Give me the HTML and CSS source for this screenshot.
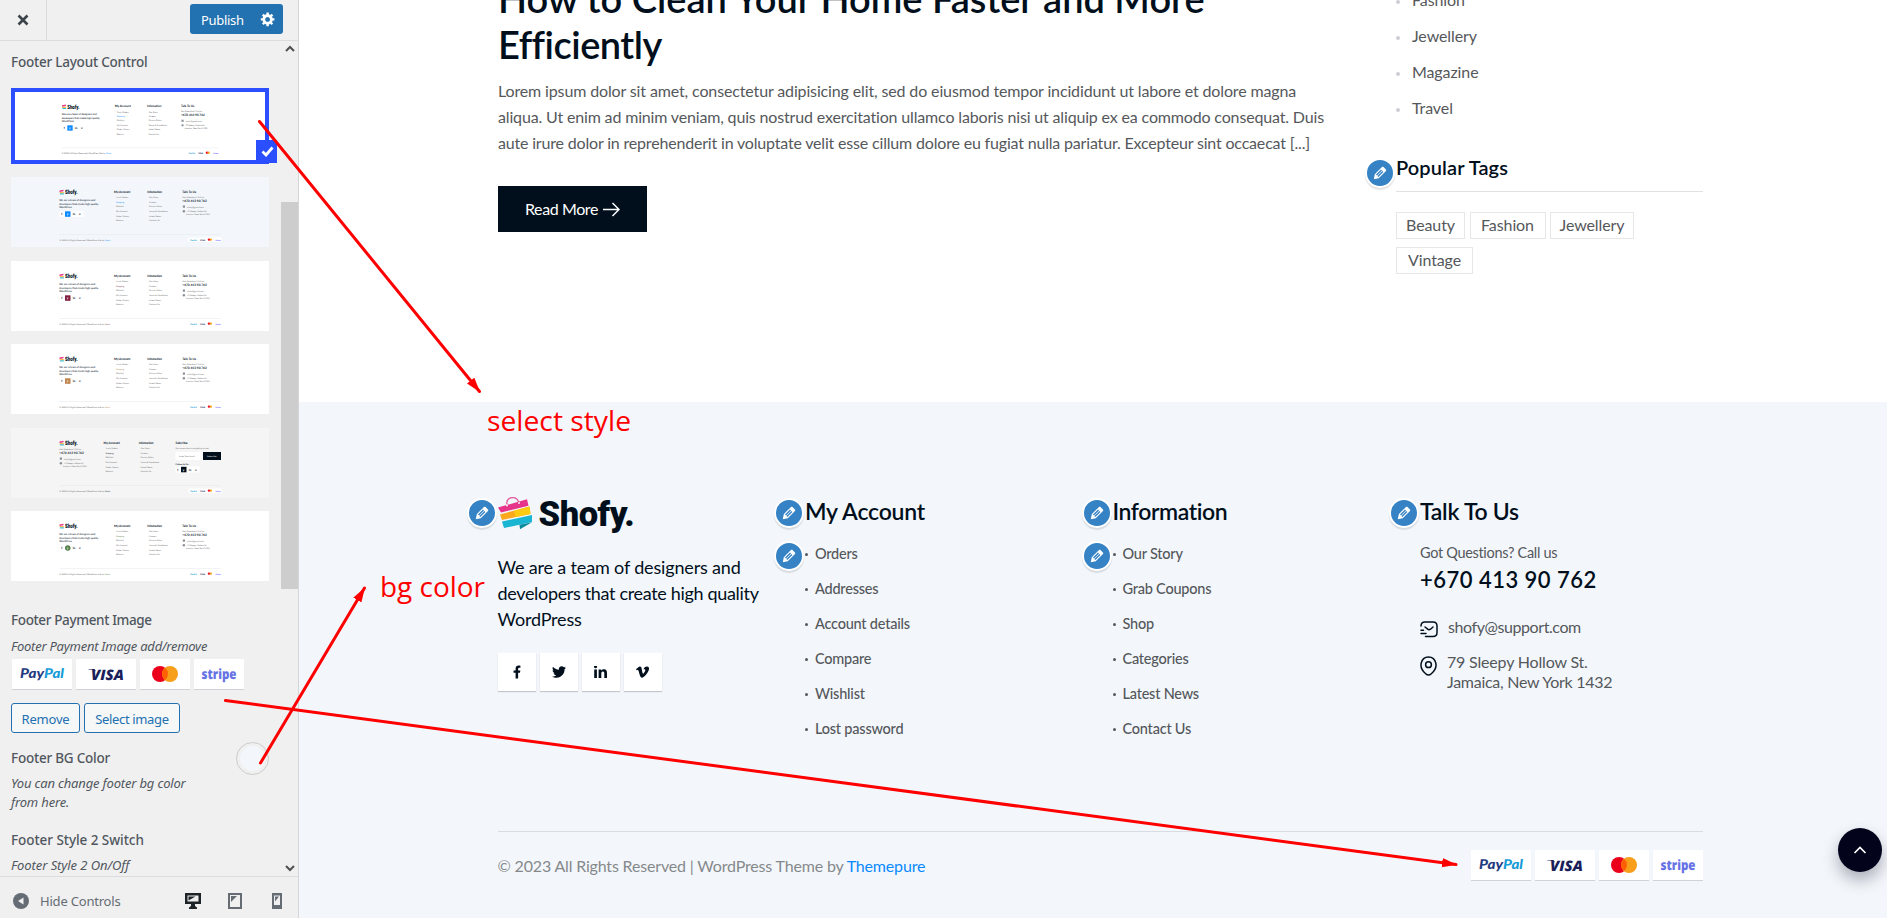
FILE: index.html
```html
<!DOCTYPE html>
<html lang="en">
<head>
<meta charset="utf-8">
<title>Customize: Footer</title>
<link rel="stylesheet" href="styles.css">
</head>
<body>
<svg class="defs" width="0" height="0">
  <defs>
  <symbol id="pencil" viewBox="0 0 20 20"><path d="M13.89 3.39l2.71 2.72c.46.46.42 1.24.03 1.64l-8.01 8.02-5.56 1.16 1.16-5.58s7.6-7.63 7.99-8.03c.39-.39 1.22-.39 1.68.07zm-2.73 2.79l-5.59 5.61 1.11 1.11 5.54-5.65zm-2.97 8.23l5.58-5.6-1.07-1.08-5.59 5.6z"/></symbol>
  <symbol id="pay" viewBox="0 0 232 32">
    <g class="pay-card"><rect x="0" y="0" width="60" height="30"/><rect x="64" y="0" width="60" height="30"/><rect x="128" y="0" width="50" height="30"/><rect x="182" y="0" width="50" height="30"/></g>
    <g class="pay-edge"><rect x="0" y="30" width="60" height="1"/><rect x="64" y="30" width="60" height="1"/><rect x="128" y="30" width="50" height="1"/><rect x="182" y="30" width="50" height="1"/></g>
    <text x="8" y="18.5" class="pay-pp" fill="#253b80" textLength="24" lengthAdjust="spacingAndGlyphs">Pay</text>
    <text x="32" y="18.5" class="pay-pp" fill="#179bd7" textLength="20" lengthAdjust="spacingAndGlyphs">Pal</text>
    <text x="79" y="20.5" class="pay-visa" textLength="33" lengthAdjust="spacingAndGlyphs">VISA</text>
    <path d="M76.500 10h6l1.500 2.500c-2-1.500-4-2-7.500-2z" fill="#1a1f5b"/>
    <circle cx="148" cy="15" r="8" fill="#eb001b"/><circle cx="158" cy="15" r="8" fill="#f79e1b"/><path d="M153 8.800a8 8 0 0 1 0 12.400a8 8 0 0 1 0-12.400z" fill="#ff5f00"/>
    <text x="189.500" y="20" class="pay-stripe" textLength="35" lengthAdjust="spacingAndGlyphs">stripe</text>
  </symbol>
  <symbol id="bag" viewBox="0 0 35 33">
    <path d="M9 7.500C8 2 12 .7 15 .7s5 2 6 5.500" fill="none" stroke="#e0569b" stroke-width="1.300"/>
    <path d="M0 10.500l29-8.200 1.500 6.500L3 15.500z" fill="#e5348a"/>
    <path d="M2 17.500L31.500 9.500l1 7.500L4 23z" fill="#fba81c"/><path d="M16 13.700l15.500-4.200 1 7.500-15 3z" fill="#fccb12"/>
    <path d="M4 24.500L34 18v7l-28 6z" fill="#19b5d3"/><path d="M21.500 27.700L34 25.300l-12 7z" fill="#0c8a9e"/>
    <circle cx="9" cy="8.500" r=".9" fill="#fff"/><circle cx="21" cy="6" r=".9" fill="#fff"/>
  </symbol>
  <g id="mini-logo">
    <path d="M48.500 13.500l4-.8v1.600l-4 .8z" fill="#e5348a"/><path d="M48.700 15.200h4v1h-4z" fill="#fba81c"/><path d="M48.900 16.400h4v1h-4z" fill="#19b5d3"/>
    <text x="54" y="17" class="m-logo" textLength="12.500" lengthAdjust="spacingAndGlyphs">Shofy.</text>
  </g>
  <g id="mini-bottom">
    <path d="M48.300 57.500H210" stroke="#e4e7ea" stroke-width=".5"/>
    <text x="48.300" y="63.600" class="m-grey" textLength="45" lengthAdjust="spacingAndGlyphs">© 2023 All Rights Reserved | WordPress Site by</text>
    <text x="94" y="63.600" class="m-accent" textLength="5.300" lengthAdjust="spacingAndGlyphs">Shofy</text>
    <rect x="177.500" y="60.500" width="33" height="4.500" class="m-card"/>
    <text x="179.300" y="63.600" class="m-pay" fill="#179bd7" textLength="6.500" lengthAdjust="spacingAndGlyphs">PayPal</text>
    <text x="189" y="63.600" class="m-pay" fill="#1a1f5b" textLength="5" lengthAdjust="spacingAndGlyphs">VISA</text>
    <circle cx="198" cy="62.600" r="1.200" fill="#eb001b"/><circle cx="199.800" cy="62.600" r="1.200" fill="#f79e1b"/>
    <text x="204.500" y="63.600" class="m-pay" fill="#635bff" textLength="5" lengthAdjust="spacingAndGlyphs">stripe</text>
  </g>
  <g id="mini-account">
    <text x="103" y="15.800" class="m-head" textLength="16.500" lengthAdjust="spacingAndGlyphs">My Account</text>
    <g class="m-grey"><text x="105" y="21.300">Track Orders</text><text x="105" y="25.800" class="m-accent">Shipping</text><text x="105" y="30.300">Wishlist</text><text x="105" y="35">My Account</text><text x="105" y="39.500">Order History</text><text x="105" y="44">Returns</text></g>
  </g>
  <g id="mini-info">
    <text x="136.300" y="15.800" class="m-head" textLength="14.700" lengthAdjust="spacingAndGlyphs">Infomation</text>
    <g class="m-grey"><text x="138" y="21.300">Our Story</text><text x="138" y="25.800">Careers</text><text x="138" y="30.300">Privacy Policy</text><text x="138" y="35">Terms &amp; Conditions</text><text x="138" y="39.500">Latest News</text><text x="138" y="44">Contact Us</text></g>
  </g>
  <g id="mini-talk">
    <text x="171.300" y="21" class="m-grey">Got Questions? Call us</text>
    <text x="171.300" y="24.900" class="m-head" textLength="24.500" lengthAdjust="spacingAndGlyphs">+670 413 90 762</text>
    <rect x="171.800" y="28.500" width="2.200" height="2.200" fill="#89909a"/><text x="176" y="30.800" class="m-grey">shofy@gmail.com</text>
    <circle cx="172.900" cy="34.300" r="1.200" fill="#89909a"/><text x="176" y="35" class="m-grey">79 Sleepy Hollow St.</text><text x="175" y="38.200" class="m-grey">Jamaica, New York 1432</text>
  </g>
  <g id="mini-social">
    <rect x="48.500" y="34" width="24" height="6" class="m-card"/>
    <rect x="54" y="34.300" width="5.500" height="5.500" class="m-active"/>
    <text x="50.300" y="38.300" class="m-sym">f</text><text x="55.800" y="38.200" class="m-sym m-white">y</text><text x="61.800" y="38.300" class="m-sym">in</text><text x="68" y="38.300" class="m-sym">v</text>
  </g>
  <symbol id="mini-a" viewBox="0 0 258 70">
    <use href="#mini-logo"/>
    <g class="m-text"><text x="48.300" y="24" textLength="36" lengthAdjust="spacingAndGlyphs">We are a team of designers and</text><text x="48.300" y="27.600" textLength="39" lengthAdjust="spacingAndGlyphs">developers that create high quality</text><text x="48.300" y="31" textLength="12.500" lengthAdjust="spacingAndGlyphs">WordPress</text></g>
    <use href="#mini-social"/><use href="#mini-account"/><use href="#mini-info"/>
    <text x="171.300" y="15.800" class="m-head" textLength="13.700" lengthAdjust="spacingAndGlyphs">Talk To Us</text>
    <use href="#mini-talk"/><use href="#mini-bottom"/>
  </symbol>
  <symbol id="mini-b" viewBox="0 0 258 70">
    <use href="#mini-logo"/><use href="#mini-talk" x="-123" y="1"/><use href="#mini-account" x="-10.500"/><use href="#mini-info" x="-8.500"/>
    <text x="164.500" y="15.800" class="m-head" textLength="12.500" lengthAdjust="spacingAndGlyphs">Subcribe.</text>
    <text x="164.500" y="21.300" class="m-grey" textLength="33" lengthAdjust="spacingAndGlyphs">Our conversation is just getting started</text>
    <rect x="164.500" y="24" width="27" height="8" fill="#fff"/><rect x="192" y="24" width="18" height="8" fill="#010f1c"/>
    <text x="168" y="28.800" class="m-grey">Enter Your Email</text><text x="196" y="28.800" class="m-tinywhite">Subscribe</text>
    <text x="164.500" y="37.300" class="m-sub">Follow Us On</text>
    <use href="#mini-social" x="116" y="4.500"/><use href="#mini-bottom"/>
  </symbol>
  </defs>
</svg>

<div class="app">
  <aside class="panel">
    <header class="panel-top">
      <div class="close"><svg width="12" height="12" viewBox="0 0 12 12"><path d="M1.500 1.500l9 9M10.500 1.500l-9 9" stroke="#3c434a" stroke-width="2.600"/></svg></div>
      <div class="publish"><span>Publish</span>
        <svg width="16" height="16" viewBox="0 0 20 20" fill="#fff"><path d="M18 12h-2.180c-.17.700-.44 1.350-.81 1.930l1.540 1.540-2.100 2.100-1.540-1.540c-.58.360-1.230.630-1.910.790V19H8v-2.180c-.68-.16-1.330-.43-1.910-.79l-1.540 1.540-2.120-2.120 1.540-1.540c-.36-.58-.63-1.230-.79-1.910H1V9.030h2.170c.16-.7.440-1.350.8-1.940L2.430 5.550l2.100-2.100 1.540 1.540c.58-.37 1.240-.64 1.930-.81V2h3v2.180c.68.160 1.330.43 1.910.79l1.540-1.540 2.120 2.120-1.540 1.540c.36.590.64 1.240.8 1.940H18V12zm-8.500 1.500c1.660 0 3-1.340 3-3s-1.340-3-3-3-3 1.340-3 3 1.340 3 3 3z"/></svg>
      </div>
    </header>
    <div class="panel-body">
      <div class="controls">
        <h3 class="label l1">Footer Layout Control</h3>
        <div class="thumbs">
          <div class="thumb selected blue"><svg viewBox="0 0 258 70"><use href="#mini-a"/></svg><span class="check"><svg width="13" height="11" viewBox="0 0 13 11"><path d="M1.500 5.500l3.500 3.500L11.500 1.500" fill="none" stroke="#fff" stroke-width="2.800"/></svg></span></div>
          <div class="thumb blue tint"><svg viewBox="0 0 258 70"><use href="#mini-a"/></svg></div>
          <div class="thumb wine"><svg viewBox="0 0 258 70"><use href="#mini-a"/></svg></div>
          <div class="thumb tan"><svg viewBox="0 0 258 70"><use href="#mini-a"/></svg></div>
          <div class="thumb dark"><svg viewBox="0 0 258 70"><use href="#mini-b"/></svg></div>
          <div class="thumb green"><svg viewBox="0 0 258 70"><use href="#mini-a"/></svg></div>
        </div>
        <h3 class="label l2">Footer Payment Image</h3>
        <p class="desc d1">Footer Payment Image add/remove</p>
        <svg class="side-pay" width="232" height="32"><use href="#pay"/></svg>
        <div class="buttons"><span class="btn b1">Remove</span><span class="btn b2">Select image</span></div>
        <div class="color-row">
          <div><h3 class="label l3">Footer BG Color</h3><p class="desc d2">You can change footer bg color<br>from here.</p></div>
          <span class="swatch"></span>
        </div>
        <h3 class="label l4">Footer Style 2 Switch</h3>
        <p class="desc d3">Footer Style 2 On/Off</p>
      </div>
      <div class="scroll">
        <svg width="10" height="7" viewBox="0 0 10 7"><path d="M1 6l4-4 4 4" fill="none" stroke="#505050" stroke-width="2"/></svg>
        <div class="scroll-thumb"></div>
        <svg width="10" height="7" viewBox="0 0 10 7"><path d="M1 1l4 4 4-4" fill="none" stroke="#505050" stroke-width="2"/></svg>
      </div>
    </div>
    <footer class="panel-foot">
      <svg width="16" height="16" viewBox="0 0 16 16"><circle cx="8" cy="8" r="8" fill="#656c74"/><path d="M10.500 4.500v7L5 8z" fill="#f0f0f0"/></svg>
      <span class="hide">Hide Controls</span>
      <div class="devices">
        <svg width="16" height="16" viewBox="0 0 16 16"><path d="M0 0h16v11h-6v2l2 1.500V16H4v-1.500L6 13v-2H0z" fill="#1d2327"/><path d="M2.500 2.500h11v6h-11z" fill="#f0f0f0"/><path d="M3.500 3.500h7l-7 4z" fill="#1d2327"/></svg>
        <svg width="14" height="16" viewBox="0 0 14 16"><path d="M0 0h14v16H0z" fill="#656c74"/><path d="M2 2h10v12H2z" fill="#f0f0f0"/><path d="M3 3h6L3 9z" fill="#656c74"/></svg>
        <svg width="10" height="16" viewBox="0 0 10 16"><path d="M0 0h10v16H0z" fill="#656c74"/><path d="M2 2.500h6v9.500H2z" fill="#f0f0f0"/><path d="M3 3.500h4l-4 5z" fill="#656c74"/></svg>
      </div>
    </footer>
  </aside>

  <main class="preview">
    <section class="blog">
      <article class="post">
        <h2 class="title"><span class="t1">How to Clean Your Home Faster and More</span><br><span class="t2">Efficiently</span></h2>
        <p class="excerpt"><span class="e1">Lorem ipsum dolor sit amet, consectetur adipisicing elit, sed do eiusmod tempor incididunt ut labore et dolore magna</span><br><span class="e2">aliqua. Ut enim ad minim veniam, quis nostrud exercitation ullamco laboris nisi ut aliquip ex ea commodo consequat. Duis</span><br><span class="e3">aute irure dolor in reprehenderit in voluptate velit esse cillum dolore eu fugiat nulla pariatur. Excepteur sint occaecat [...]</span></p>
        <a class="more"><span>Read More</span><svg width="17" height="15" viewBox="0 0 17 15"><path d="M0 7.500h16M9.500 1l6.500 6.500L9.500 14" fill="none" stroke="#fff" stroke-width="1.500"/></svg></a>
      </article>
      <aside class="widgets">
        <ul class="cats"><li>Fashion</li><li>Jewellery</li><li>Magazine</li><li>Travel</li></ul>
        <div class="tags-head"><i class="edit"><svg width="18" height="18"><use href="#pencil"/></svg></i><h3>Popular Tags</h3></div>
        <div class="tags"><span class="g1">Beauty</span><span class="g2">Fashion</span><span class="g3">Jewellery</span><span class="g4">Vintage</span></div>
      </aside>
    </section>

    <footer class="site-footer">
      <div class="cols">
        <div class="col">
          <i class="edit"><svg width="18" height="18"><use href="#pencil"/></svg></i>
          <div class="logo"><svg width="35" height="33"><use href="#bag"/></svg><span>Shofy.</span></div>
          <p class="about"><span class="a1">We are a team of designers and</span><br><span class="a2">developers that create high quality</span><br><span class="a3">WordPress</span></p>
          <div class="social">
            <span><svg width="8" height="14" viewBox="0 0 320 512"><path d="M279.140 288l14.220-92.660h-88.910v-60.130c0-25.350 12.420-50.060 52.240-50.060h40.420V6.260S260.430 0 225.360 0c-73.220 0-121.080 44.380-121.080 124.720v70.620H22.890V288h81.390v224h100.170V288z"/></svg></span>
            <span><svg width="14" height="14" viewBox="0 0 512 512"><path d="M459.370 151.716c.325 4.548.325 9.097.325 13.645 0 138.720-105.583 298.558-298.558 298.558-59.452 0-114.680-17.219-161.137-47.106 8.447.974 16.568 1.299 25.340 1.299 49.055 0 94.213-16.568 130.274-44.832-46.132-.975-84.792-31.188-98.112-72.772 6.498.974 12.995 1.624 19.818 1.624 9.421 0 18.843-1.300 27.614-3.573-48.081-9.747-84.143-51.980-84.143-102.985v-1.299c13.969 7.797 30.214 12.670 47.431 13.319-28.264-18.843-46.781-51.005-46.781-87.391 0-19.492 5.197-37.360 14.294-52.954 51.655 63.675 129.300 105.258 216.365 109.807-1.624-7.797-2.599-15.918-2.599-24.040 0-57.828 46.782-104.934 104.934-104.934 30.213 0 57.502 12.670 76.670 33.137 23.715-4.548 46.456-13.320 66.599-25.340-7.798 24.366-24.366 44.833-46.132 57.827 21.117-2.273 41.584-8.122 60.426-16.243-14.292 20.791-32.161 39.308-52.628 54.253z"/></svg></span>
            <span><svg width="13" height="13" viewBox="0 0 448 448"><path d="M100.280 416H7.400V116.900h92.880zM53.790 76.100C24.090 76.100 0 51.500 0 21.800a53.790 53.790 0 0 1 107.580 0c0 29.700-24.100 54.300-53.790 54.300zM447.900 416h-92.680V270.400c0-34.700-.7-79.200-48.290-79.200-48.290 0-55.690 37.700-55.690 76.700V416h-92.780V116.900h89.080v40.800h1.300c12.400-23.500 42.690-48.300 87.880-48.300 94 0 111.280 61.900 111.280 142.300V416z"/></svg></span>
            <span><svg width="13" height="12" viewBox="0 0 448 400"><path d="M447.800 97.600c-2 43.600-32.400 103.300-91.400 179.100-60.900 79.200-112.400 118.800-154.600 118.800-26.100 0-48.200-24.100-66.300-72.300C100.300 194 85.300 118.200 56.200 118.200c-3.400 0-15.100 7.100-35.200 21.100L0 112.200c51.600-45.300 100.900-95.700 131.800-98.500 34.900-3.400 56.300 20.500 64.400 71.500 28.700 181.500 41.400 208.900 93.600 126.700 18.700-29.600 28.800-52.100 30.200-67.600 4.800-45.900-35.800-42.800-63.300-31C278.700 41.300 320.800 6.200 383 8.200c46.100 1.400 67.800 31.200 64.800 89.400z"/></svg></span>
          </div>
        </div>
        <div class="col">
          <i class="edit"><svg width="18" height="18"><use href="#pencil"/></svg></i><i class="edit second"><svg width="18" height="18"><use href="#pencil"/></svg></i>
          <h3 class="h1">My Account</h3>
          <ul><li>Orders</li><li>Addresses</li><li>Account details</li><li>Compare</li><li>Wishlist</li><li>Lost password</li></ul>
        </div>
        <div class="col">
          <i class="edit"><svg width="18" height="18"><use href="#pencil"/></svg></i><i class="edit second"><svg width="18" height="18"><use href="#pencil"/></svg></i>
          <h3 class="h2">Information</h3>
          <ul><li>Our Story</li><li>Grab Coupons</li><li>Shop</li><li>Categories</li><li>Latest News</li><li>Contact Us</li></ul>
        </div>
        <div class="col">
          <i class="edit"><svg width="18" height="18"><use href="#pencil"/></svg></i>
          <h3 class="h3">Talk To Us</h3>
          <div class="got">Got Questions? Call us</div>
          <div class="phone">+670 413 90 762</div>
          <div class="contact mail"><svg width="18" height="17" viewBox="0 0 18 17" fill="none" stroke="#010f1c" stroke-width="1.500" stroke-linecap="round"><path d="M1 5C1 2 2.500 1 5 1h8c2.500 0 4 1.300 4 4v6.500c0 2.700-1.500 4-4 4H5.500"/><path d="M5 6l2.700 2.200c.9.700 1.900.7 2.800 0L13 6M1 12.500h5M1 9.200h2.500"/></svg><span>shofy@support.com</span></div>
          <div class="contact place"><svg width="17" height="20" viewBox="0 0 17 20" fill="none" stroke="#010f1c" stroke-width="1.500"><circle cx="8.500" cy="8.700" r="2.900"/><path d="M1.200 7.200C2.900-1.100 14.100-1.100 15.800 7.200c1 4.400-1.700 8.100-4.500 10.500-1.600 1.500-4 1.500-5.600 0C2.900 15.300.2 11.600 1.200 7.200z"/></svg><span><b class="p1">79 Sleepy Hollow St.</b><br><b class="p2">Jamaica, New York 1432</b></span></div>
        </div>
      </div>
      <div class="bottom">
        <p class="copy">© 2023 All Rights Reserved | WordPress Theme by <a>Themepure</a></p>
        <svg width="232" height="32"><use href="#pay"/></svg>
      </div>
    </footer>
  </main>

  <div class="to-top"><svg width="14" height="8" viewBox="0 0 14 8"><path d="M1.500 7L7 1.500 12.500 7" fill="none" stroke="#fff" stroke-width="1.700"/></svg></div>

  <svg class="notes" width="1887" height="918" viewBox="0 0 1887 918">
    <defs><marker id="tip" markerUnits="userSpaceOnUse" markerWidth="16" markerHeight="10" refX="14" refY="5" orient="auto"><path d="M0 .3L15 5L0 9.700z" fill="red"/></marker></defs>
    <g stroke="red" stroke-width="3" stroke-linecap="round" marker-end="url(#tip)">
      <path d="M259.500 121.500L479.500 391.500"/><path d="M260.500 763L364.500 588"/><path d="M225.500 700.500L1456 864.500"/>
    </g>
    <text x="487" y="431" textLength="144" lengthAdjust="spacingAndGlyphs">select style</text>
    <text x="380" y="597" textLength="105" lengthAdjust="spacingAndGlyphs">bg color</text>
  </svg>
</div>
</body>
</html>
```
FILE: styles.css
```css
* { box-sizing: border-box; }
body { margin: 0; background: #fff; font-family: Lato, sans-serif; overflow: hidden; }
h2, h3, p, ul { margin: 0; padding: 0; }
ul { list-style: none; }
svg { display: block; flex: none; }
.defs { position: absolute; }
.app { position: relative; display: flex; width: 1887px; height: 918px; overflow: hidden; }

/* customizer panel */
.panel { width: 299px; flex: none; display: flex; flex-direction: column; background: #f0f0f0; border-right: 1px solid #d5d5d7; font-family: "Noto Sans", sans-serif; color: #50575e; white-space: nowrap; }
.panel-top { height: 41px; display: flex; justify-content: space-between; border-bottom: 1px solid #dcdcde; }
.close { width: 47px; border-right: 1px solid #dcdcde; display: flex; align-items: center; justify-content: center; }
.publish { width: 93px; height: 30px; margin: 4px 15px 0 0; padding: 0 7px 0 11px; display: flex; align-items: center; justify-content: space-between; background: #2271b1; color: #fff; border-radius: 3px; font-size: 13px; letter-spacing: -.3px; }
.publish span { padding-top: 2px; }
.panel-body { height: 835px; display: flex; overflow: hidden; }
.controls { width: 281px; flex: none; padding: 11px 0 0 11px; }
.scroll { width: 17px; display: flex; flex-direction: column; align-items: center; padding: 4px 0; }
.scroll-thumb { width: 17px; height: 387px; margin: 150px 0 276px; background: #cdcdcd; }
.label { font-size: 13.500px; line-height: 20px; font-weight: 500; letter-spacing: -.22px; }
.desc { font-size: 13px; line-height: 19px; font-style: italic; letter-spacing: -.17px; }
.thumbs { display: flex; flex-direction: column; gap: 13.400px; margin-top: 16px; }
.thumb { width: 258px; height: 70px; background: #fff; position: relative; }
.thumb > svg { width: 100%; height: 100%; }
.selected { height: 76px; border: 4px solid #2b4eff; }
.check { position: absolute; right: -12px; bottom: -3px; width: 21px; height: 23px; background: #2b4eff; display: flex; align-items: center; justify-content: center; padding-left: 2px; }
.blue { --accent: #0989ff; }
.tint { background: #f3f7fb; }
.wine { --accent: #821f40; }
.tan { --accent: #bd844c; }
.dark { --accent: #010f1c; background: #f5f5f5; }
.green { --accent: #558049; --round: 3px; }
.l2 { margin-top: 29px; letter-spacing: -.36px; }
.d1 { margin-top: 7px; letter-spacing: -.25px; }
.side-pay { margin: 3px 0 0 1px; }
.buttons { display: flex; gap: 4px; margin-top: 12px; }
.btn { height: 30px; line-height: 30px; border: 1px solid #2271b1; border-radius: 3px; background: #f6f7f7; color: #2271b1; text-align: center; font-size: 13px; letter-spacing: -.2px; }
.b1 { width: 69px; }
.b2 { width: 96px; letter-spacing: -.35px; }
.color-row { display: flex; justify-content: space-between; width: 258px; margin-top: 9px; }
.color-row .label { margin-top: 6px; }
.d2 { margin-top: 6px; }
.swatch { width: 33px; height: 33px; border-radius: 50%; border: 1px solid #cbcbcb; background: #f3f7fb; box-shadow: inset 0 0 0 3px #f0f0f0; }
.l4 { margin-top: 18px; letter-spacing: -.05px; }
.d3 { margin-top: 6px; letter-spacing: -.08px; }
.panel-foot { height: 42px; border-top: 1px solid #dcdcde; display: flex; align-items: center; padding: 6px 16px 0 13px; font-size: 13px; color: #656c74; }
.hide { margin-left: 11px; letter-spacing: -.2px; }
.devices { margin-left: auto; display: flex; gap: 27px; }
.devices svg:last-child { margin-left: 3px; }

/* footer thumbnails */
.thumb text, .defs text { text-rendering: geometricPrecision; }
.m-logo { font: 900 6px Roboto, sans-serif; fill: #010f1c; }
.m-head { font: 700 3.200px Lato, sans-serif; fill: #010f1c; }
.m-text { font: 500 2.600px Lato, sans-serif; fill: #010f1c; }
.m-grey { font: 400 2.200px Lato, sans-serif; fill: #666; }
.m-accent { font: 400 2.200px Lato, sans-serif; fill: var(--accent); }
.m-sub { font: 700 2.200px Lato, sans-serif; fill: #010f1c; }
.m-pay { font: 900 2.200px Lato, sans-serif; }
.m-sym { font: 900 3px Lato, sans-serif; fill: #010f1c; }
.m-sym.m-white { fill: #fff; }
.m-tinywhite { font: 400 2.200px Lato, sans-serif; fill: #fff; }
.m-active { fill: var(--accent); rx: var(--round, 0px); }
.m-card { fill: #fff; }

/* payment strip */
.pay-card { fill: #fff; }
.pay-edge { fill: #cfd2d6; }
.pay-pp { font: italic 900 13.500px Lato, sans-serif; }
.pay-visa { font: italic 800 14.500px "Open Sans", sans-serif; fill: #1a1f5b; }
.pay-stripe { font: 800 14px "Open Sans", sans-serif; fill: #6772e5; }

/* page preview */
.preview { flex: 1; display: flex; flex-direction: column; white-space: nowrap; }
.blog { height: 402px; overflow: hidden; display: grid; grid-template-columns: 898px 307px; padding-left: 199px; color: #55585b; }
.title { margin-top: -25px; font-size: 38px; line-height: 46px; font-weight: 600; color: #010f1c; }
.t2 { letter-spacing: -.5px; }
.excerpt { margin-top: 11px; font-size: 16px; line-height: 26px; }
.e1 { letter-spacing: -.136px; }
.e2 { letter-spacing: -.16px; }
.e3 { letter-spacing: -.18px; }
.more { width: 149px; height: 46px; margin-top: 30px; padding: 0 27px; display: flex; align-items: center; justify-content: space-between; background: #010f1c; color: #fff; font-size: 16px; letter-spacing: -.4px; }
.more span { padding-bottom: 1px; }
.cats { margin-top: -18px; font-size: 16px; }
.cats li { height: 36px; line-height: 36px; display: flex; align-items: center; gap: 12px; letter-spacing: -.1px; }
.cats li::before { content: ""; width: 4px; height: 4px; border-radius: 50%; background: #cdcfd2; margin-top: 3px; }
.tags-head { position: relative; margin-top: 27px; padding-bottom: 10px; border-bottom: 1px solid #e0e2e3; }
.tags-head h3 { font-size: 20px; line-height: 28px; font-weight: 600; color: #010f1c; letter-spacing: .1px; }
.tags { display: flex; flex-wrap: wrap; gap: 8px 4.500px; margin-top: 20px; width: 245px; }
.tags span { height: 27px; line-height: 24px; border: 1px solid #e6e7e8; text-align: center; font-size: 16px; letter-spacing: -.1px; }
.g1 { width: 69px; } .g2 { width: 76px; } .g3 { width: 84px; } .g4 { width: 77px; }

.edit { position: absolute; left: -31px; top: 3px; width: 30px; height: 30px; border-radius: 50%; border: 2px solid #fff; background: #3582c4; box-shadow: 0 2px 1px rgba(60,67,74,.15); display: flex; align-items: center; justify-content: center; fill: #fff; }
.edit.second { top: 46px; }
.tags-head .edit { top: 5px; }

.site-footer { height: 516px; background: #f3f7fb; padding: 93px 184px 0 198.500px; }
.cols { display: grid; grid-template-columns: repeat(4, 307.500px); height: 336px; }
.col { position: relative; color: #55585b; }
.col h3 { font-size: 23px; line-height: 32px; font-weight: 600; color: #010f1c; margin-bottom: 9px; }
.h1 { letter-spacing: -.2px; }
.h2 { letter-spacing: -.42px; }
.h3 { letter-spacing: -.28px; }
.col li { height: 35px; display: flex; align-items: center; gap: 7px; font-size: 14.500px; font-weight: 500; letter-spacing: -.22px; }
.col li::before { content: ""; width: 3px; height: 3px; border-radius: 50%; background: #55585b; margin-top: 2px; }
.logo { display: flex; height: 36px; padding-top: 2px; gap: 6px; }
.logo span { font: 900 34.500px/34px Roboto, sans-serif; color: #010f1c; letter-spacing: -.45px; }
.about { margin-top: 23px; font-size: 18px; line-height: 26px; color: #010f1c; }
.a1 { letter-spacing: -.16px; }
.a2 { letter-spacing: -.33px; }
.a3 { letter-spacing: -.2px; }
.social { display: flex; gap: 4px; margin-top: 21px; }
.social span { width: 38px; height: 38px; background: #fff; box-shadow: 0 1px 1px rgba(1,15,28,.2); display: flex; align-items: center; justify-content: center; fill: #010f1c; }
.got { margin-top: 15px; font-size: 14.500px; line-height: 22px; letter-spacing: -.32px; }
.phone { margin-top: 2px; font-size: 22px; line-height: 28px; font-weight: 600; color: #010f1c; letter-spacing: .48px; }
.contact { display: flex; gap: 10px; line-height: 20px; font-size: 16px; }
.contact b { font-weight: 400; }
.contact svg { margin-top: 4px; }
.mail { margin-top: 23px; letter-spacing: -.42px; }
.place { margin-top: 14px; }
.p1 { letter-spacing: -.18px; }
.p2 { letter-spacing: -.27px; }
.bottom { width: 1205px; display: flex; justify-content: space-between; border-top: 1px solid #d9dde1; padding-top: 18px; }
.copy { font-size: 16px; line-height: 31px; color: #86898c; letter-spacing: -.17px; }
.copy a { color: #0989ff; }

.to-top { position: absolute; left: 1838px; top: 828px; width: 44px; height: 44px; border-radius: 50%; background: #03041c; box-shadow: 0 8px 16px rgba(3,4,28,.3); display: flex; align-items: center; justify-content: center; }
.notes { position: absolute; left: 0; top: 0; pointer-events: none; }
.notes text { font: 400 28px "Open Sans", sans-serif; fill: red; }
```
